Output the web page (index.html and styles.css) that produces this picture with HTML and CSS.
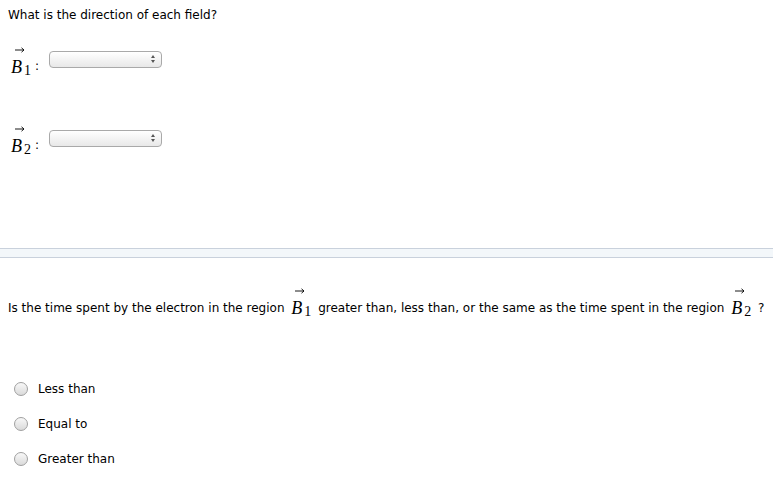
FILE: index.html
```html
<!DOCTYPE html>
<html lang="en">
<head>
    <meta charset="UTF-8">
    <title>Field direction</title>
    <link rel="stylesheet" href="styles.css">
</head>
<body>
    <div class="part">
        <p class="question">What is the direction of each field?</p>

        <div class="field-row">
            <span class="vec"><svg class="arrow" width="10" height="6" viewBox="0 0 10 6"><path d="M0 3H9M6.5 0.8L9 3L6.5 5.2" fill="none" stroke="#000" stroke-width="0.9"/></svg><span class="sym">B</span><sub>1</sub></span>
            <span class="colon">:</span>
            <span class="picker"><span class="spin"></span></span>
        </div>

        <div class="field-row">
            <span class="vec"><svg class="arrow" width="10" height="6" viewBox="0 0 10 6"><path d="M0 3H9M6.5 0.8L9 3L6.5 5.2" fill="none" stroke="#000" stroke-width="0.9"/></svg><span class="sym">B</span><sub>2</sub></span>
            <span class="colon">:</span>
            <span class="picker"><span class="spin"></span></span>
        </div>
    </div>

    <div class="divider"></div>

    <div class="part">
        <p class="sentence">Is the time spent by the electron in the region <span class="vec"><svg class="arrow" width="10" height="6" viewBox="0 0 10 6"><path d="M0 3H9M6.5 0.8L9 3L6.5 5.2" fill="none" stroke="#000" stroke-width="0.9"/></svg><span class="sym">B</span><sub>1</sub></span> greater than, less than, or the same as the time spent in the region <span class="vec"><svg class="arrow" width="10" height="6" viewBox="0 0 10 6"><path d="M0 3H9M6.5 0.8L9 3L6.5 5.2" fill="none" stroke="#000" stroke-width="0.9"/></svg><span class="sym">B</span><sub>2</sub></span> ?</p>

        <ul class="choices">
            <li><span class="radio"></span>Less than</li>
            <li><span class="radio"></span>Equal to</li>
            <li><span class="radio"></span>Greater than</li>
        </ul>
    </div>
</body>
</html>
```

FILE: styles.css
```css
body {
    margin: 0;
    font-family: "DejaVu Sans", Verdana, sans-serif;
    font-size: 12px;
    color: #000;
    background: #fff;
}

.part {
    padding: 0 8px;
}

.question {
    margin: 0;
    padding-top: 8px;
    line-height: 15px;
}

/* label + colon + dropdown */
.field-row {
    display: flex;
    align-items: flex-start;
    height: 32px;
    margin-top: 21px;
}

.field-row + .field-row {
    margin-top: 47px;
}

.vec {
    display: inline-block;
    position: relative;
    line-height: 17px;
}

.field-row .vec {
    margin: 15px 0 0 3px;
}

.vec .arrow {
    position: absolute;
    top: -12px;
    left: 4px;
}

.vec .sym {
    font-family: "Liberation Serif", serif;
    font-style: italic;
    font-size: 18px;
}

.vec sub {
    font-family: "Liberation Serif", serif;
    font-size: 14px;
    line-height: 0;
    vertical-align: baseline;
    position: relative;
    top: 2px;
    margin-left: 2px;
}

.colon {
    margin: 15px 10px 0 4px;
    line-height: 15px;
}

.picker {
    position: relative;
    width: 111px;
    height: 15px;
    margin-top: 7px;
    border: 1px solid #a9a9a9;
    border-radius: 4px;
    background: linear-gradient(#ffffff, #e8e8e8);
}

.spin::before,
.spin::after {
    content: "";
    position: absolute;
    right: 6px;
    border-left: 2px solid transparent;
    border-right: 2px solid transparent;
}

.spin::before {
    top: 3px;
    border-bottom: 3px solid #555;
}

.spin::after {
    top: 8px;
    border-top: 3px solid #555;
}

.divider {
    margin-top: 93px;
    height: 8px;
    border-top: 1px solid #c9d1dc;
    border-bottom: 1px solid #c9d1dc;
    background: #f3f7fa;
}

.sentence {
    margin: 40px 0 0;
    line-height: 20px;
    white-space: nowrap;
}

.sentence .vec {
    margin: 0 3px;
    vertical-align: -2px;
}

.choices {
    list-style: none;
    margin: 52px 0 0;
    padding: 0;
}

.choices li {
    display: flex;
    align-items: center;
    height: 35px;
}

.radio {
    width: 12px;
    height: 12px;
    border: 1px solid #a0a0a0;
    border-radius: 50%;
    background: linear-gradient(#f8f8f8, #dadada);
    margin: 0 10px 0 6px;
}
```
